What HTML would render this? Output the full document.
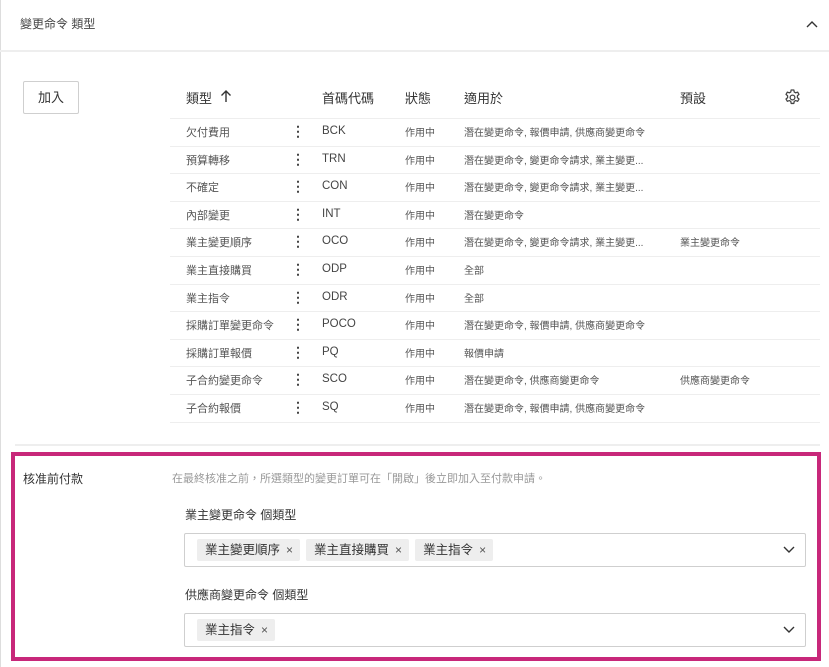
<!DOCTYPE html>
<html><head><meta charset="utf-8"><style>
*{margin:0;padding:0;box-sizing:border-box}
body{width:829px;height:667px;background:#fff;font-family:"Liberation Sans","Noto Sans CJK TC",sans-serif;color:#3c3c3c;position:relative;overflow:hidden}
.a{position:absolute;white-space:nowrap}
.s{font-size:11px;color:#555}
.h{font-size:13px;color:#333}
.line{position:absolute;height:1px;background:#eeeeee}
.tag{display:inline-block;background:#eeeeee;border-radius:2px;font-size:12.5px;color:#333;padding:0 7px 0 8px;height:22px;line-height:22px;margin-right:6px}
.tag span{font-size:12px;margin-left:6px;color:#555}
.sel{position:absolute;left:184px;width:622px;height:34px;border:1px solid #cfcfcf;border-radius:2px;padding:5px 9px 5px 12px}
</style></head><body>
<div class="a" style="left:0;top:0;width:1px;height:667px;background:#ddd"></div>
<div class="a" style="left:20px;top:15px;font-size:12px;color:#444">變更命令 類型</div>
<svg class="a" style="left:805px;top:19px" width="14" height="10" viewBox="0 0 14 10"><path d="M2 8 L7 3 L12 8" fill="none" stroke="#333" stroke-width="1.4"/></svg>
<div class="line" style="left:0;top:50px;width:829px;height:2px"></div>
<div class="a" style="left:23px;top:81px;width:56px;height:33px;border:1px solid #cfcfcf;border-radius:2px;font-size:13px;text-align:center;line-height:31px;color:#333">加入</div>
<div class="a h" style="left:186px;top:88px">類型</div>
<svg class="a" style="left:219px;top:89px" width="14" height="14" viewBox="0 0 14 14"><path d="M7 13 V2 M2.5 6.5 L7 2 L11.5 6.5" fill="none" stroke="#333" stroke-width="1.4"/></svg>
<div class="a h" style="left:322px;top:88px">首碼代碼</div>
<div class="a h" style="left:405px;top:88px">狀態</div>
<div class="a h" style="left:464px;top:88px">適用於</div>
<div class="a h" style="left:680px;top:88px">預設</div>
<svg class="a" style="left:783px;top:88px" width="19" height="19" viewBox="0 0 24 24"><path d="M10.3 2.5h3.4l.5 2.6 1.8 1 2.5-.9 1.7 2.9-2 1.7v2.4l2 1.7-1.7 2.9-2.5-.9-1.8 1-.5 2.6h-3.4l-.5-2.6-1.8-1-2.5.9-1.7-2.9 2-1.7v-2.4l-2-1.7 1.7-2.9 2.5.9 1.8-1z" fill="none" stroke="#444" stroke-width="1.6" stroke-linejoin="round"/><circle cx="12" cy="12" r="3" fill="none" stroke="#444" stroke-width="1.6"/></svg>
<div id="rows"></div>
<div class="line" style="left:15px;top:444px;width:805px;height:2px"></div>
<div class="a" style="left:11px;top:452px;width:810px;height:209px;border:4px solid #c8287a"></div>
<div class="a" style="left:23px;top:470px;font-size:12px;color:#333">核准前付款</div>
<div class="a" style="left:172px;top:470px;font-size:11px;color:#999">在最終核准之前，所選類型的變更訂單可在「開啟」後立即加入至付款申請。</div>
<div class="a" style="left:185px;top:506px;font-size:12px;color:#333">業主變更命令 個類型</div>
<div class="sel" style="top:533px"><span class="tag">業主變更順序<span>×</span></span><span class="tag">業主直接購買<span>×</span></span><span class="tag">業主指令<span>×</span></span></div>
<svg class="a" style="left:782px;top:545px" width="14" height="10" viewBox="0 0 14 10"><path d="M2 2 L7 7 L12 2" fill="none" stroke="#333" stroke-width="1.4"/></svg>
<div class="a" style="left:185px;top:586px;font-size:12px;color:#333">供應商變更命令 個類型</div>
<div class="sel" style="top:613px"><span class="tag">業主指令<span>×</span></span></div>
<svg class="a" style="left:782px;top:625px" width="14" height="10" viewBox="0 0 14 10"><path d="M2 2 L7 7 L12 2" fill="none" stroke="#333" stroke-width="1.4"/></svg>
<script>
var d=[["欠付費用","BCK","潛在變更命令, 報價申請, 供應商變更命令",""],["預算轉移","TRN","潛在變更命令, 變更命令請求, 業主變更...",""],["不確定","CON","潛在變更命令, 變更命令請求, 業主變更...",""],["內部變更","INT","潛在變更命令",""],["業主變更順序","OCO","潛在變更命令, 變更命令請求, 業主變更...","業主變更命令"],["業主直接購買","ODP","全部",""],["業主指令","ODR","全部",""],["採購訂單變更命令","POCO","潛在變更命令, 報價申請, 供應商變更命令",""],["採購訂單報價","PQ","報價申請",""],["子合約變更命令","SCO","潛在變更命令, 供應商變更命令","供應商變更命令"],["子合約報價","SQ","潛在變更命令, 報價申請, 供應商變更命令",""]];
var h='';for(var i=0;i<d.length;i++){var y=118+i*27.6;var t=y+6;
h+='<div class="line" style="left:170px;top:'+y+'px;width:650px"></div>';
h+='<div class="a s" style="left:186px;top:'+t+'px">'+d[i][0]+'</div>';
h+='<div class="a" style="left:291px;top:'+(t-1)+'px;font-size:14px;font-weight:bold;color:#444">⋮</div>';
h+='<div class="a" style="left:322px;top:'+(t+1)+'px;font-size:11.5px;color:#444">'+d[i][1]+'</div>';
h+='<div class="a s" style="left:405px;top:'+t+'px;font-size:10px">作用中</div>';
h+='<div class="a s" style="left:464px;top:'+t+'px;font-size:10px">'+d[i][2]+'</div>';
h+='<div class="a s" style="left:680px;top:'+t+'px;font-size:10px">'+d[i][3]+'</div>';}
h+='<div class="line" style="left:170px;top:'+(118+11*27.6)+'px;width:650px"></div>';
document.getElementById('rows').innerHTML=h;
</script>
</body></html>
